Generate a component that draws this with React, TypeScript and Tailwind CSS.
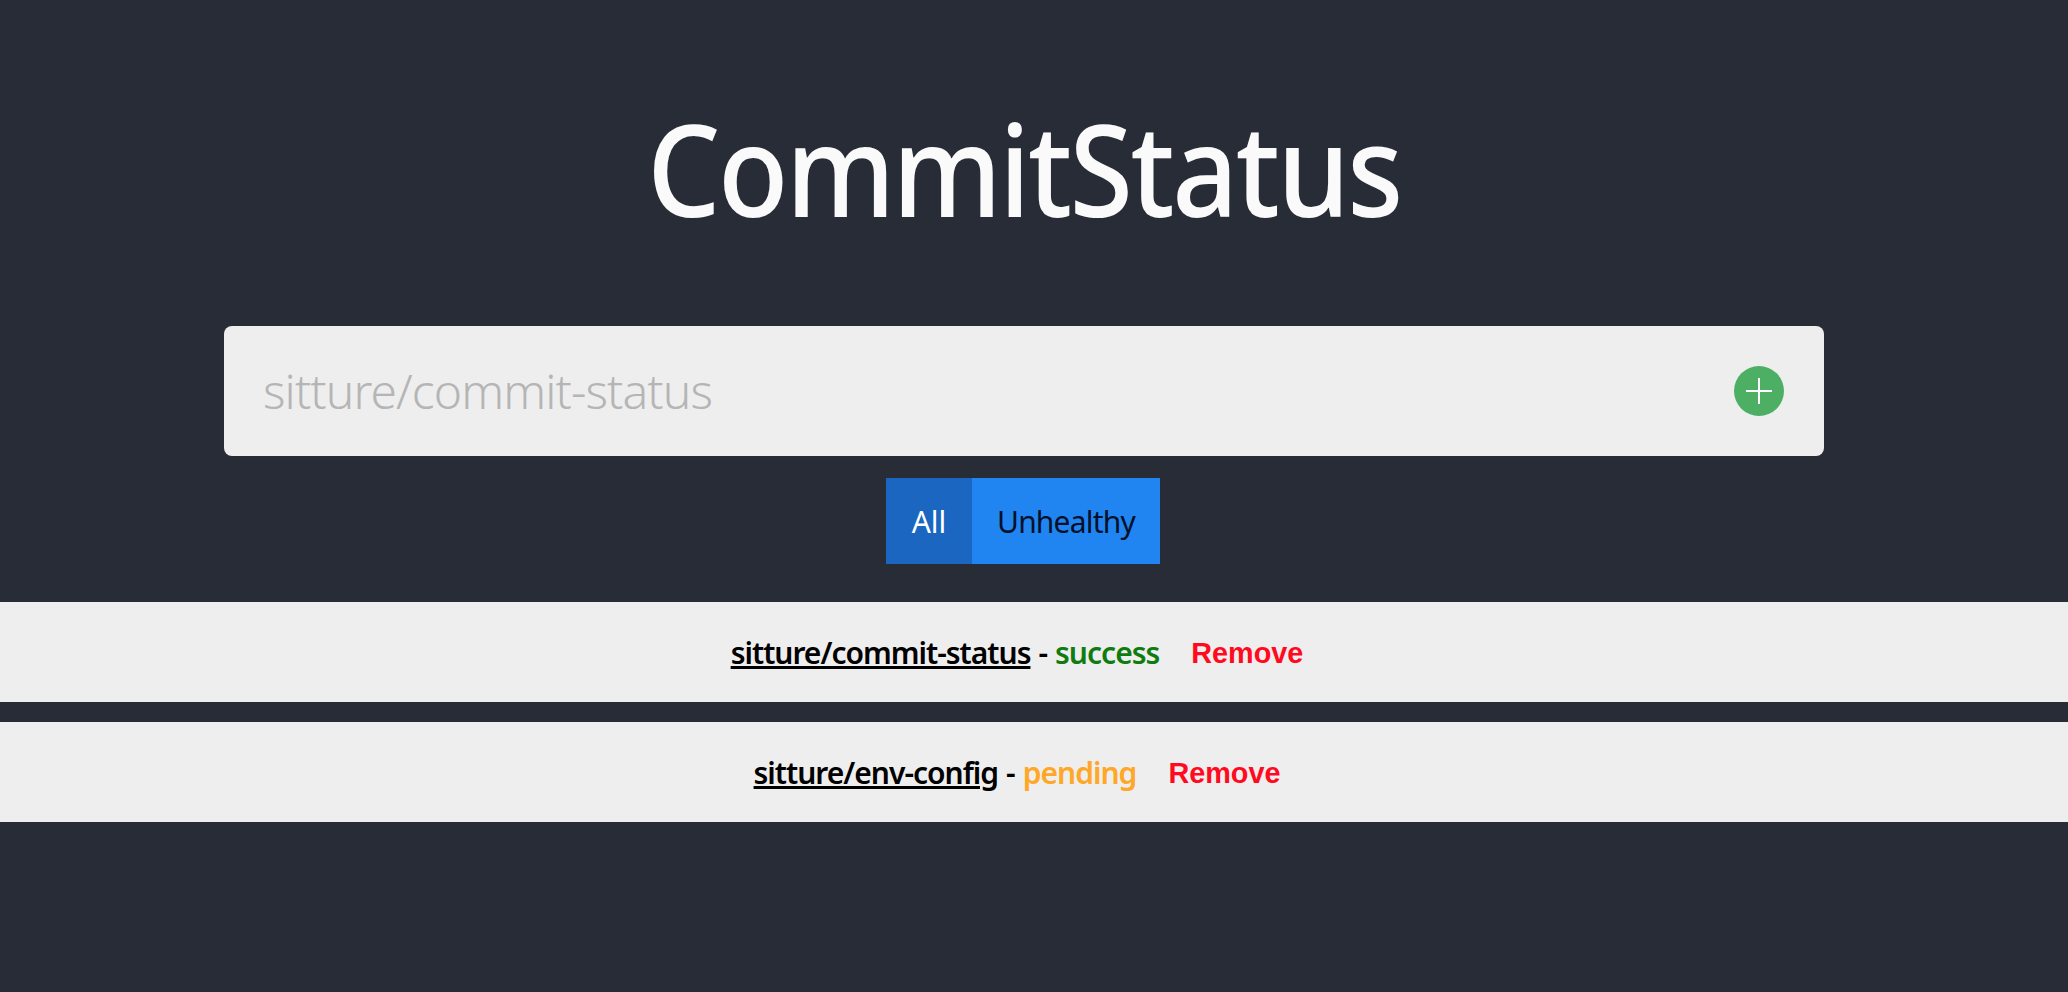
export default function App() {
  const rows = [
    { repo: "sitture/commit-status", status: "success", color: "text-[#107c10]" },
    { repo: "sitture/env-config", status: "pending", color: "text-[#ffa726]" },
  ];
  return (
    <div className="h-[992px] overflow-hidden bg-[#282c37] font-['Noto_Sans','Open_Sans',sans-serif]">
      <div className="w-[2048px]">
        <h1 className="scale-x-[0.9] pt-[83px] text-center text-[128px] font-medium leading-[170px] tracking-[-2.7px] text-[#fafafa]">CommitStatus</h1>
        <div className="mx-auto mt-[73px] flex h-[130px] w-[1600px] items-center rounded-lg bg-[#eeeeee] pl-[39px] pr-[40px]">
          <input
            readOnly
            placeholder="sitture/commit-status"
            className="min-w-0 flex-1 bg-transparent text-[48px] font-light tracking-[-0.9px] outline-none placeholder:text-[#b5b5b5]"
          />
          <div className="flex h-[50px] w-[50px] items-center justify-center rounded-full bg-[#4caf64]">
            <svg width="28" height="28" viewBox="0 0 28 28" stroke="#fff" strokeWidth="2"><path d="M14 1v26M1 14h26" /></svg>
          </div>
        </div>
        <div className="mt-[22px] flex justify-center pr-[2px]">
          <button className="h-[86px] w-[86px] bg-[#1a66c0] text-[30px] text-white">All</button>
          <button className="h-[86px] w-[188px] bg-[#2085f0] text-[30px] tracking-[-0.8px] text-[#04102a]">Unhealthy</button>
        </div>
      </div>
      <div className="mt-[38px] flex flex-col gap-5">
        {rows.map((r) => (
          <div key={r.repo} className="flex h-[100px] w-full items-center justify-center bg-[#eeeeee] pr-[34px] text-[30px] font-semibold tracking-[-1px] text-black">
            <a href="#" className="underline">{r.repo}</a>
            <span className="ml-2">-</span>
            <span className={`ml-2 ${r.color}`}>{r.status}</span>
            <button className="ml-8 mt-[3px] font-['Liberation_Sans',sans-serif] text-[28.8px] font-bold tracking-normal text-[#ff0a1e]">Remove</button>
          </div>
        ))}
      </div>
    </div>
  );
}
